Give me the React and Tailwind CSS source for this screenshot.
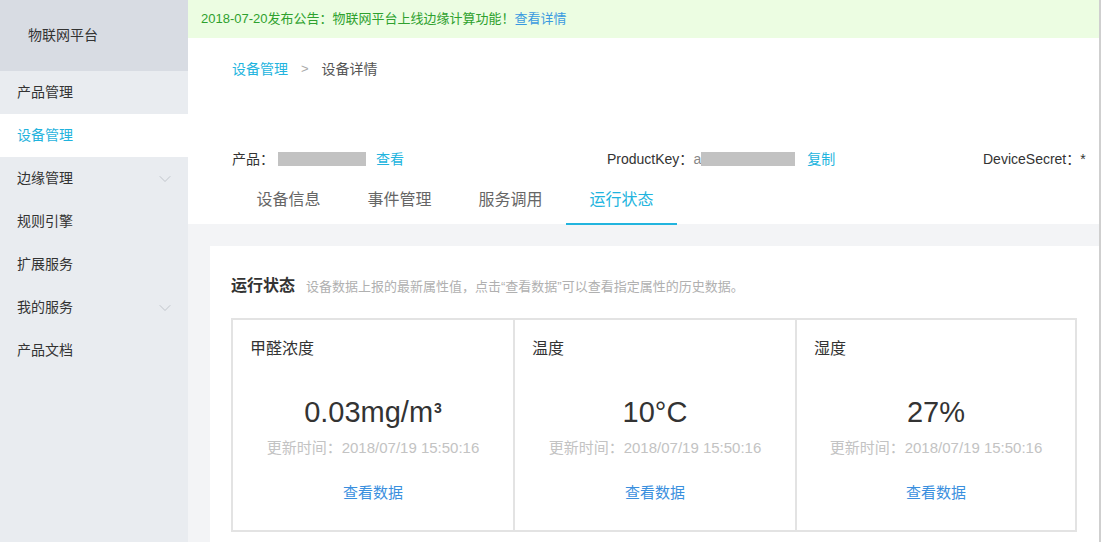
import React from 'react';
import { ChevronDown } from 'lucide-react';

const font = { fontFamily: '"Liberation Sans", "Noto Sans CJK SC", sans-serif' };

const menu = [
  { label: '产品管理' },
  { label: '设备管理', active: true },
  { label: '边缘管理', arrow: true },
  { label: '规则引擎' },
  { label: '扩展服务' },
  { label: '我的服务', arrow: true },
  { label: '产品文档' },
];

const cards = [
  { title: '甲醛浓度', value: <>0.03mg/m<sup className="text-[14px] font-bold relative -top-[9px] ml-[1px]">3</sup></> },
  { title: '温度', value: '10°C' },
  { title: '湿度', value: '27%' },
];

const tabs = ['设备信息', '事件管理', '服务调用', '运行状态'];

const MetricCard = ({ title, value, last }) => (
  <div className={`h-[214px] border-2 border-[#e3e3e3] ${last ? '' : 'border-r-0'} px-[17px] pt-[17px] flex flex-col`}>
    <div className="text-[16px] leading-[24px] text-[#333]">{title}</div>
    <div className="mt-[33px] text-center text-[29px] leading-[36px] text-[#333]">{value}</div>
    <div className="mt-[8px] text-center text-[15px] leading-[20px] text-[#c3c3c3]">更新时间：2018/07/19 15:50:16</div>
    <div className="mt-[25px] text-center text-[15px] leading-[20px] text-[#3a8fde]">查看数据</div>
  </div>
);

export default function App() {
  return (
    <div className="w-[1101px] h-[542px] overflow-hidden flex bg-white" style={font}>
      <aside className="w-[188px] shrink-0 bg-[#e9ecf0] flex flex-col">
        <div className="h-[71px] bg-[#d8dce3] flex items-center pl-[28px] text-[14px] text-[#333]">物联网平台</div>
        {menu.map((m) => (
          <div
            key={m.label}
            className={`h-[43px] flex items-center justify-between pl-[17px] pr-[13px] text-[14px] ${m.active ? 'bg-white text-[#1fb3dd]' : 'text-[#333]'}`}
          >
            <span>{m.label}</span>
            {m.arrow && <ChevronDown size={20} strokeWidth={0.9} className="text-[#b3b8bf]" />}
          </div>
        ))}
      </aside>

      <main className="flex-1 flex flex-col bg-[#f3f4f6] border-r-2 border-[#cfcfcf] min-w-0">
        <div className="h-[38px] shrink-0 bg-[#ecfde2] flex items-center pl-[13px] text-[13px] text-[#2ea12e] whitespace-nowrap">
          2018-07-20发布公告：物联网平台上线边缘计算功能！<span className="text-[#3a9ae0]">查看详情</span>
        </div>

        <div className="bg-white h-[186px] shrink-0 pl-[44px] flex flex-col">
          <div className="mt-[21px] flex items-center gap-[13px] text-[14px] leading-[20px]">
            <span className="text-[#22b4de]">设备管理</span>
            <span className="text-[#aaa] text-[13px]">&gt;</span>
            <span className="text-[#555]">设备详情</span>
          </div>

          <div className="mt-[70px] flex items-center text-[14px] leading-[20px] text-[#333] whitespace-nowrap">
            <div className="w-[375px] flex items-center">
              <span>产品：</span>
              <span className="ml-[4px] w-[88px] h-[14px] bg-[#c2c2c2]" />
              <span className="ml-[10px] text-[#22b4de]">查看</span>
            </div>
            <div className="w-[376px] flex items-center">
              <span>ProductKey：</span>
              <span className="text-[#888]">a</span>
              <span className="w-[94px] h-[14px] bg-[#c2c2c2]" />
              <span className="ml-[12px] text-[#22b4de]">复制</span>
            </div>
            <div>DeviceSecret：*</div>
          </div>

          <div className="mt-[7px] ml-[1px] flex text-[16px] text-[#666]">
            {tabs.map((t, i) => (
              <div
                key={t}
                className={`w-[111px] h-[49px] flex items-center justify-center border-b-2 ${i === 3 ? 'text-[#22b4de] border-[#22b4de]' : 'border-transparent'}`}
              >
                {t}
              </div>
            ))}
          </div>
        </div>

        <section className="mt-[22px] ml-[22px] flex-1 bg-white px-[21px] pt-[28px]">
          <div className="flex items-baseline gap-[11px]">
            <span className="text-[16px] font-bold text-[#333]">运行状态</span>
            <span className="text-[13px] text-[#b0b0b0]">设备数据上报的最新属性值，点击“查看数据”可以查看指定属性的历史数据。</span>
          </div>
          <div className="mt-[20px] grid grid-cols-3 w-[846px]">
            {cards.map((c, i) => (
              <MetricCard key={c.title} title={c.title} value={c.value} last={i === 2} />
            ))}
          </div>
        </section>
      </main>
    </div>
  );
}
